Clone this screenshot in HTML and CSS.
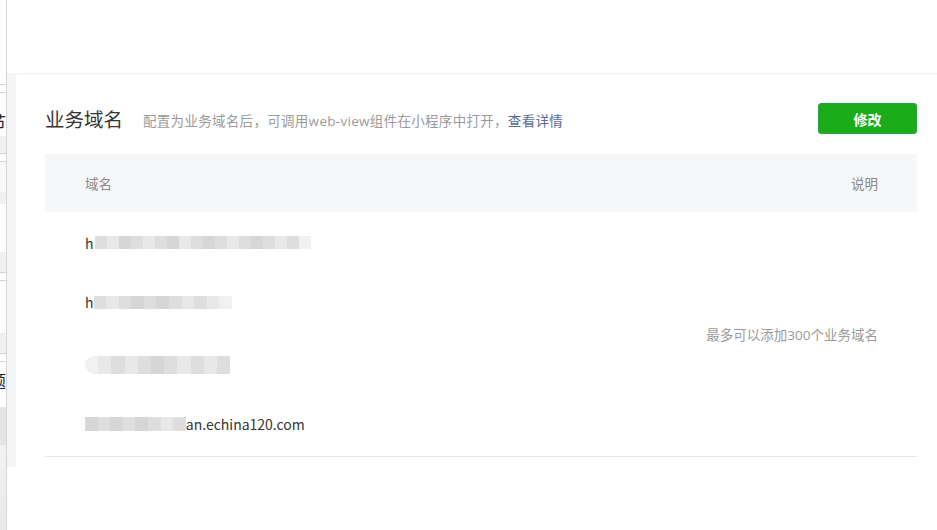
FILE: index.html
```html
<!DOCTYPE html>
<html lang="zh-CN">
<head>
<meta charset="utf-8">
<title>业务域名</title>
<link rel="stylesheet" href="styles.css">
</head>
<body>
<div class="page">
  <aside class="side">
    <div class="s-gap1"></div>
    <div class="s-line"></div>
    <div class="s-sp7"></div>
    <div class="s-line"></div>
    <div class="s-item s-h43"><span class="s-glyph">节</span></div>
    <div class="s-band s-h17"></div>
    <div class="s-line"></div>
    <div class="s-sp7"></div>
    <div class="s-line"></div>
    <div class="s-light s-h30"></div>
    <div class="s-band s-h12"></div>
    <div class="s-item s-h48"></div>
    <div class="s-band s-h20"></div>
    <div class="s-line"></div>
    <div class="s-sp7"></div>
    <div class="s-line"></div>
    <div class="s-item s-h52"></div>
    <div class="s-band s-h20"></div>
    <div class="s-line"></div>
    <div class="s-sp7"></div>
    <div class="s-line"></div>
    <div class="s-item s-h45"><span class="s-glyph2">题</span></div>
    <div class="s-dark s-h38"></div>
    <div class="s-rest"></div>
  </aside>
  <main class="main">
    <div class="top"></div>
    <div class="stage">
      <section class="card">
        <header class="head">
          <h2 class="title">业务域名</h2>
          <p class="desc">配置为业务域名后，可调用web-view组件在小程序中打开，<a class="link" href="#">查看详情</a></p>
          <button class="btn">修改</button>
        </header>
        <div class="table">
          <div class="th th-name">域名</div>
          <div class="th th-note">说明</div>
          <div class="cell c1">
            <span class="txt">h</span>
            <span class="mosaic m1">
              <i class="k2"></i><i class="k3"></i><i class="k1"></i><i class="k2"></i><i class="k3"></i><i class="k2"></i><i class="k1"></i><i class="k3"></i><i class="k2"></i><i class="k1"></i><i class="k2"></i><i class="k3"></i><i class="k2"></i><i class="k1"></i><i class="k2"></i><i class="k3"></i><i class="k2"></i><i class="k4"></i>
            </span>
          </div>
          <div class="note">最多可以添加300个业务域名</div>
          <div class="cell c2">
            <span class="txt">h</span>
            <span class="mosaic m2">
              <i class="k2"></i><i class="k3"></i><i class="k2"></i><i class="k1"></i><i class="k2"></i><i class="k1"></i><i class="k2"></i><i class="k3"></i><i class="k2"></i><i class="k3"></i><i class="k4"></i>
            </span>
          </div>
          <div class="cell c3">
            <span class="mosaic m3">
              <i class="k4"></i><i class="k3"></i><i class="k2"></i><i class="k3"></i><i class="k2"></i><i class="k1"></i><i class="k2"></i><i class="k3"></i><i class="k2"></i><i class="k3"></i><i class="k2"></i>
            </span>
          </div>
          <div class="cell c4">
            <span class="mosaic m4">
              <i class="k1"></i><i class="k2"></i><i class="k1"></i><i class="k2"></i><i class="k1"></i><i class="k2"></i><i class="k3"></i><i class="k2"></i>
            </span><span class="txt">an.echina120.com</span>
          </div>
        </div>
      </section>
    </div>
  </main>
</div>
</body>
</html>
```
FILE: styles.css
```css
* { box-sizing: border-box; }
html, body { margin: 0; padding: 0; background: #fff; }
body {
  font-family: "Open Sans", "Noto Sans CJK SC", sans-serif;
  color: #353535;
  width: 937px;
  height: 530px;
  overflow: hidden;
}
.page { display: flex; height: 530px; }

/* left sidebar fragment */
.side {
  width: 7px;
  flex: none;
  display: flex;
  flex-direction: column;
  border-right: 1px solid #d6d6d6;
  background: #fff;
  overflow: hidden;
}
.s-gap1 { height: 84px; }
.s-line { height: 1px; background: #d0d0d0; }
.s-sp7 { height: 7px; }
.s-item { position: relative; overflow: hidden; background: #fff; }
.s-band { background: #efefef; }
.s-light { background: #f7f7f7; }
.s-dark { background: #e4e4e4; }
.s-rest { flex: 1; background: linear-gradient(#f2f2f2, #e9e9e9); }
.s-h43 { height: 43px; }
.s-h17 { height: 17px; }
.s-h30 { height: 30px; }
.s-h12 { height: 12px; }
.s-h48 { height: 48px; }
.s-h20 { height: 20px; }
.s-h52 { height: 52px; }
.s-h45 { height: 45px; }
.s-h38 { height: 38px; }
.s-glyph, .s-glyph2 {
  position: absolute;
  left: -11px;
  font-family: "Noto Sans CJK SC", sans-serif;
  font-size: 17px;
  line-height: 1;
  color: #222;
}
.s-glyph { top: 20px; }
.s-glyph2 { top: 10px; }

.main { flex: 1; display: flex; flex-direction: column; }
.top { height: 73px; }
.stage {
  height: 394px;
  background: #f4f5f7;
  padding-left: 9px;
  display: flex;
}
.card {
  flex: 1;
  background: #fff;
  box-shadow: inset 0 1px 0 #eef0f2;
  border-radius: 3px 0 0 0;
  padding: 30px 20px 0 29px;
}

.head {
  display: flex;
  align-items: center;
  height: 31px;
  margin-bottom: 20px;
}
.title {
  margin: 0;
  font-family: "Noto Sans CJK SC", sans-serif;
  font-size: 19.5px;
  font-weight: 400;
  color: #353535;
  line-height: 1;
}
.desc {
  margin: 0 0 0 20px;
  font-size: 13.5px;
  letter-spacing: 0.3px;
  color: #9a9a9a;
  flex: 1;
  padding-top: 3px;
}
.link { color: #576b95; text-decoration: none; }
.btn {
  width: 99px;
  height: 31px;
  border: 1px solid #2ba245;
  border-radius: 3px;
  background: #1aad19;
  color: #fff;
  font-family: "Noto Sans CJK SC", sans-serif;
  font-size: 14px;
  font-weight: 700;
  padding: 0;
}

.table {
  display: grid;
  grid-template-columns: 1fr auto;
  grid-template-rows: 58px repeat(4, 61px);
  border-bottom: 1px solid #e7e7e7;
}
.th {
  background: #f6f7f9;
  font-size: 13.5px;
  color: #8a8a8a;
  display: flex;
  align-items: center;
}
.th-name { padding-left: 40px; }
.th-note { padding-right: 39px; justify-content: flex-end; }
.cell {
  grid-column: 1;
  display: flex;
  align-items: center;
  padding-left: 40px;
  font-family: "Noto Sans CJK SC", sans-serif;
  font-size: 14px;
  color: #353535;
}
.c2 { padding-bottom: 3px; }
.c4 { padding-bottom: 3px; }
.note {
  grid-column: 2;
  grid-row: 2 / span 4;
  align-self: center;
  padding-right: 39px;
  font-size: 13.5px;
  color: #9a9a9a;
}
.txt { line-height: 1; }
.mosaic { display: flex; height: 13px; }
.mosaic i { display: block; width: 12px; height: 100%; }
.m1 { margin-left: 1px; }
.m1 i { width: 12px; }
.m2 i { width: 12.6px; }
.m3 { height: 18px; border-radius: 14px 0 0 14px; overflow: hidden; }
.m3 i { width: 13.2px; }
.m4 { height: 14px; }
.m4 i { width: 12.6px; }
.k1 { background: #d6d6d6; }
.k2 { background: #dedede; }
.k3 { background: #e8e8e8; }
.k4 { background: #f1f1f1; }
```
